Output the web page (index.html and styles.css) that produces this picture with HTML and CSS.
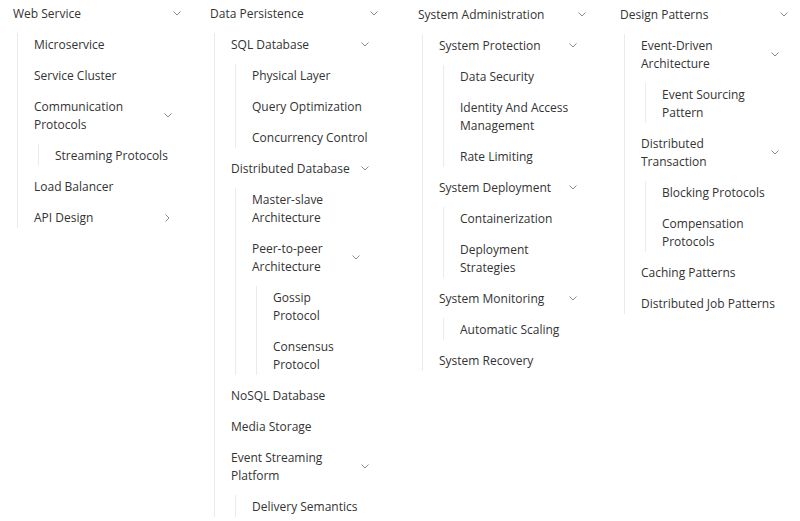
FILE: index.html
```html
<!DOCTYPE html>
<html lang="en">
<head>
    <meta charset="UTF-8" />
    <meta name="viewport" content="width=device-width, initial-scale=1.0" />
    <title>Topic Tree</title>
    <link rel="stylesheet" href="styles.css">
</head>
<body>
    <div class="tree">
    <!-- WEB SERVICE -->
    <ul class="col col-1">
        <li>
        <div class="row"><span class="label">Web Service</span><svg class="chev" viewBox="0 0 8 5"><polyline points="0.5,0.5 4,4 7.5,0.5" /></svg></div>
        <ul class="sub">
            <li><div class="row"><span class="label">Microservice</span></div></li>
            <li><div class="row"><span class="label">Service Cluster</span></div></li>
            <li>
            <div class="row"><span class="label">Communication Protocols</span><svg class="chev" viewBox="0 0 8 5"><polyline points="0.5,0.5 4,4 7.5,0.5" /></svg></div>
            <ul class="sub">
                <li><div class="row"><span class="label">Streaming Protocols</span></div></li>
            </ul>
            </li>
            <li><div class="row"><span class="label">Load Balancer</span></div></li>
            <li><div class="row"><span class="label">API Design</span><svg class="chev chev-right" viewBox="0 0 5 8"><polyline points="0.5,0.5 4,4 0.5,7.5" /></svg></div></li>
        </ul>
        </li>
    </ul>

    <!-- DATA PERSISTENCE -->
    <ul class="col col-2">
        <li>
        <div class="row"><span class="label">Data Persistence</span><svg class="chev" viewBox="0 0 8 5"><polyline points="0.5,0.5 4,4 7.5,0.5" /></svg></div>
        <ul class="sub">
            <li>
            <div class="row"><span class="label">SQL Database</span><svg class="chev" viewBox="0 0 8 5"><polyline points="0.5,0.5 4,4 7.5,0.5" /></svg></div>
            <ul class="sub">
                <li><div class="row"><span class="label">Physical Layer</span></div></li>
                <li><div class="row"><span class="label">Query Optimization</span></div></li>
                <li><div class="row"><span class="label">Concurrency Control</span></div></li>
            </ul>
            </li>
            <li>
            <div class="row"><span class="label">Distributed Database</span><svg class="chev" viewBox="0 0 8 5"><polyline points="0.5,0.5 4,4 7.5,0.5" /></svg></div>
            <ul class="sub">
                <li><div class="row"><span class="label">Master-slave Architecture</span></div></li>
                <li>
                <div class="row"><span class="label">Peer-to-peer Architecture</span><svg class="chev" viewBox="0 0 8 5"><polyline points="0.5,0.5 4,4 7.5,0.5" /></svg></div>
                <ul class="sub">
                    <li><div class="row"><span class="label">Gossip Protocol</span></div></li>
                    <li><div class="row"><span class="label">Consensus Protocol</span></div></li>
                </ul>
                </li>
            </ul>
            </li>
            <li><div class="row"><span class="label">NoSQL Database</span></div></li>
            <li><div class="row"><span class="label">Media Storage</span></div></li>
            <li>
            <div class="row"><span class="label">Event Streaming Platform</span><svg class="chev" viewBox="0 0 8 5"><polyline points="0.5,0.5 4,4 7.5,0.5" /></svg></div>
            <ul class="sub">
                <li><div class="row"><span class="label">Delivery Semantics</span></div></li>
            </ul>
            </li>
        </ul>
        </li>
    </ul>

    <!-- SYSTEM ADMINISTRATION -->
    <ul class="col col-3">
        <li>
        <div class="row"><span class="label">System Administration</span><svg class="chev" viewBox="0 0 8 5"><polyline points="0.5,0.5 4,4 7.5,0.5" /></svg></div>
        <ul class="sub">
            <li>
            <div class="row"><span class="label">System Protection</span><svg class="chev" viewBox="0 0 8 5"><polyline points="0.5,0.5 4,4 7.5,0.5" /></svg></div>
            <ul class="sub">
                <li><div class="row"><span class="label">Data Security</span></div></li>
                <li><div class="row"><span class="label">Identity And Access Management</span></div></li>
                <li><div class="row"><span class="label">Rate Limiting</span></div></li>
            </ul>
            </li>
            <li>
            <div class="row"><span class="label">System Deployment</span><svg class="chev" viewBox="0 0 8 5"><polyline points="0.5,0.5 4,4 7.5,0.5" /></svg></div>
            <ul class="sub">
                <li><div class="row"><span class="label">Containerization</span></div></li>
                <li><div class="row"><span class="label">Deployment Strategies</span></div></li>
            </ul>
            </li>
            <li>
            <div class="row"><span class="label">System Monitoring</span><svg class="chev" viewBox="0 0 8 5"><polyline points="0.5,0.5 4,4 7.5,0.5" /></svg></div>
            <ul class="sub">
                <li><div class="row"><span class="label">Automatic Scaling</span></div></li>
            </ul>
            </li>
            <li><div class="row"><span class="label">System Recovery</span></div></li>
        </ul>
        </li>
    </ul>

    <!-- DESIGN PATTERNS -->
    <ul class="col col-4">
        <li>
        <div class="row"><span class="label">Design Patterns</span><svg class="chev" viewBox="0 0 8 5"><polyline points="0.5,0.5 4,4 7.5,0.5" /></svg></div>
        <ul class="sub">
            <li>
            <div class="row"><span class="label">Event-Driven Architecture</span><svg class="chev" viewBox="0 0 8 5"><polyline points="0.5,0.5 4,4 7.5,0.5" /></svg></div>
            <ul class="sub">
                <li><div class="row"><span class="label">Event Sourcing Pattern</span></div></li>
            </ul>
            </li>
            <li>
            <div class="row"><span class="label">Distributed Transaction</span><svg class="chev" viewBox="0 0 8 5"><polyline points="0.5,0.5 4,4 7.5,0.5" /></svg></div>
            <ul class="sub">
                <li><div class="row"><span class="label">Blocking Protocols</span></div></li>
                <li><div class="row"><span class="label">Compensation Protocols</span></div></li>
            </ul>
            </li>
            <li><div class="row"><span class="label">Caching Patterns</span></div></li>
            <li><div class="row"><span class="label">Distributed Job Patterns</span></div></li>
        </ul>
        </li>
    </ul>
    </div>
</body>
</html>
```

FILE: styles.css
```css
body {
    margin: 0;
    padding: 0;
    background: #fff;
    font-family: "Open Sans", "Noto Sans", sans-serif;
    font-size: 12px;
    color: #333;
    height: 100vh;
    overflow: hidden;
}
.tree {
    display: flex;
    align-items: flex-start;
    padding-left: 13px;
    margin-top: -2px;
}
ul {
    list-style: none;
    margin: 0;
    padding: 0;
}
.col {
    width: 178px;
    flex: none;
}
.col-1 {
    margin-right: 19px;
}
.col-2 {
    margin-right: 30px;
}
.col-3 {
    margin-right: 24px;
    padding-top: 1px;
}
.col-4 {
    padding-top: 1px;
}
.row {
    display: flex;
    justify-content: space-between;
    align-items: center;
    padding: 6.5px 0;
    line-height: 18px;
}
.label {
    flex: 1;
    min-width: 0;
}
.row .label:not(:last-child) {
    padding-right: 8px;
}
.chev {
    width: 8px;
    height: 5px;
    flex: none;
    margin-right: 10px;
    fill: none;
    stroke: #8a8a8a;
    stroke-width: 1;
}
.chev-right {
    width: 5px;
    height: 8px;
    margin-right: 12px;
}
/* nested list with its guide line */
.sub {
    position: relative;
    margin: 0 9px 0 4px;
    padding-left: 17px;
}
.sub .sub .sub {
    margin-right: 17px;
}
.sub::before {
    content: "";
    position: absolute;
    left: 0;
    top: 4px;
    bottom: 5px;
    width: 1px;
    background: #ebebeb;
}
```
